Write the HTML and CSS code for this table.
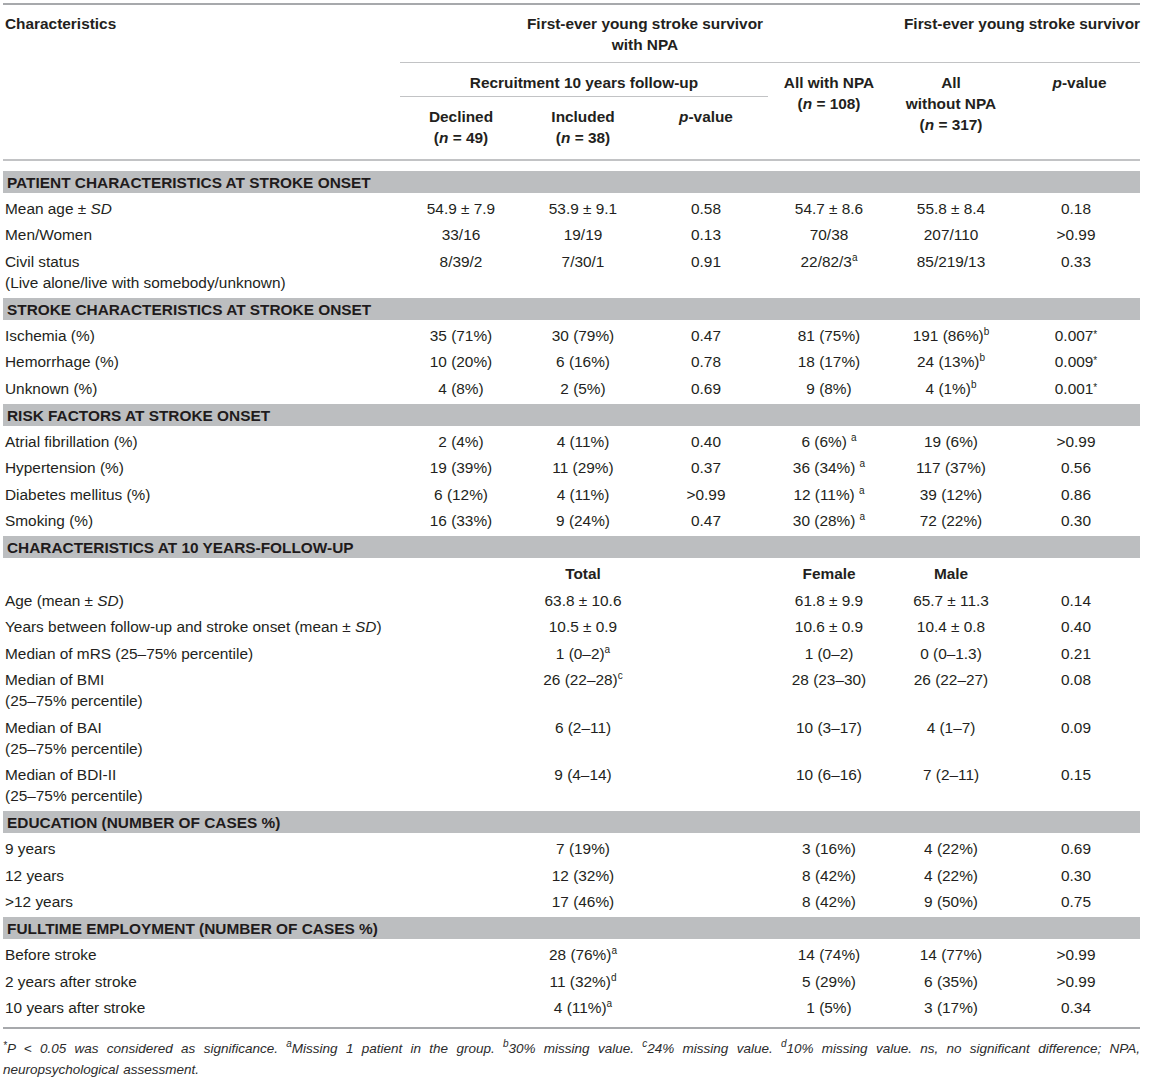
FILE: index.html
```html
<!DOCTYPE html>
<html>
<head>
<meta charset="utf-8">
<link rel="stylesheet" href="styles.css">
</head>
<body>
<div class="page">
<table class="tbl">
  <colgroup>
    <col class="c-label"><col class="c-a"><col class="c-b"><col class="c-p"><col class="c-c"><col class="c-d"><col class="c-q">
  </colgroup>
  <thead>
    <tr class="h1">
      <th rowspan="3" class="hlabel">Characteristics</th>
      <th colspan="4" class="grp">First-ever young stroke survivor<br>with NPA</th>
      <th colspan="2" class="grp grp-r">First-ever young stroke survivor</th>
    </tr>
    <tr class="h2">
      <th colspan="3" class="sub">Recruitment 10 years follow-up</th>
      <th rowspan="2" class="tall">All with NPA<br>(<i>n</i> = 108)</th>
      <th rowspan="2" class="tall">All<br>without NPA<br>(<i>n</i> = 317)</th>
      <th rowspan="2" class="tall pv"><i>p</i>-value</th>
    </tr>
    <tr class="h3">
      <th>Declined<br>(<i>n</i> = 49)</th>
      <th>Included<br>(<i>n</i> = 38)</th>
      <th><i>p</i>-value</th>
    </tr>
  </thead>
  <tbody>
    <tr class="sec first"><td colspan="7"><div class="bar">PATIENT CHARACTERISTICS AT STROKE ONSET</div></td></tr>
    <tr><td>Mean age ± <i>SD</i></td><td>54.9 ± 7.9</td><td>53.9 ± 9.1</td><td>0.58</td><td>54.7 ± 8.6</td><td>55.8 ± 8.4</td><td>0.18</td></tr>
    <tr><td>Men/Women</td><td>33/16</td><td>19/19</td><td>0.13</td><td>70/38</td><td>207/110</td><td>&gt;0.99</td></tr>
    <tr><td><span class="ln">Civil status</span><br><span class="ln">(Live alone/live with somebody/unknown)</span></td><td>8/39/2</td><td>7/30/1</td><td>0.91</td><td>22/82/3<sup>a</sup></td><td>85/219/13</td><td>0.33</td></tr>

    <tr class="sec"><td colspan="7"><div class="bar">STROKE CHARACTERISTICS AT STROKE ONSET</div></td></tr>
    <tr><td>Ischemia (%)</td><td>35 (71%)</td><td>30 (79%)</td><td>0.47</td><td>81 (75%)</td><td>191 (86%)<sup>b</sup></td><td>0.007<span class="ast">*</span></td></tr>
    <tr><td>Hemorrhage (%)</td><td>10 (20%)</td><td>6 (16%)</td><td>0.78</td><td>18 (17%)</td><td>24 (13%)<sup>b</sup></td><td>0.009<span class="ast">*</span></td></tr>
    <tr><td>Unknown (%)</td><td>4 (8%)</td><td>2 (5%)</td><td>0.69</td><td>9 (8%)</td><td>4 (1%)<sup>b</sup></td><td>0.001<span class="ast">*</span></td></tr>

    <tr class="sec"><td colspan="7"><div class="bar">RISK FACTORS AT STROKE ONSET</div></td></tr>
    <tr><td>Atrial fibrillation (%)</td><td>2 (4%)</td><td>4 (11%)</td><td>0.40</td><td>6 (6%) <sup>a</sup></td><td>19 (6%)</td><td>&gt;0.99</td></tr>
    <tr><td>Hypertension (%)</td><td>19 (39%)</td><td>11 (29%)</td><td>0.37</td><td>36 (34%) <sup>a</sup></td><td>117 (37%)</td><td>0.56</td></tr>
    <tr><td>Diabetes mellitus (%)</td><td>6 (12%)</td><td>4 (11%)</td><td>&gt;0.99</td><td>12 (11%) <sup>a</sup></td><td>39 (12%)</td><td>0.86</td></tr>
    <tr><td>Smoking (%)</td><td>16 (33%)</td><td>9 (24%)</td><td>0.47</td><td>30 (28%) <sup>a</sup></td><td>72 (22%)</td><td>0.30</td></tr>

    <tr class="sec"><td colspan="7"><div class="bar">CHARACTERISTICS AT 10 YEARS-FOLLOW-UP</div></td></tr>
    <tr class="bold"><td></td><td></td><td>Total</td><td></td><td>Female</td><td>Male</td><td></td></tr>
    <tr><td>Age (mean ± <i>SD</i>)</td><td></td><td>63.8 ± 10.6</td><td></td><td>61.8 ± 9.9</td><td>65.7 ± 11.3</td><td>0.14</td></tr>
    <tr><td>Years between follow-up and stroke onset (mean ± <i>SD</i>)</td><td></td><td>10.5 ± 0.9</td><td></td><td>10.6 ± 0.9</td><td>10.4 ± 0.8</td><td>0.40</td></tr>
    <tr><td>Median of mRS (25–75% percentile)</td><td></td><td>1 (0–2)<sup>a</sup></td><td></td><td>1 (0–2)</td><td>0 (0–1.3)</td><td>0.21</td></tr>
    <tr><td>Median of BMI<br>(25–75% percentile)</td><td></td><td>26 (22–28)<sup>c</sup></td><td></td><td>28 (23–30)</td><td>26 (22–27)</td><td>0.08</td></tr>
    <tr><td>Median of BAI<br>(25–75% percentile)</td><td></td><td>6 (2–11)</td><td></td><td>10 (3–17)</td><td>4 (1–7)</td><td>0.09</td></tr>
    <tr><td>Median of BDI-II<br>(25–75% percentile)</td><td></td><td>9 (4–14)</td><td></td><td>10 (6–16)</td><td>7 (2–11)</td><td>0.15</td></tr>

    <tr class="sec"><td colspan="7"><div class="bar">EDUCATION (NUMBER OF CASES %)</div></td></tr>
    <tr><td>9 years</td><td></td><td>7 (19%)</td><td></td><td>3 (16%)</td><td>4 (22%)</td><td>0.69</td></tr>
    <tr><td>12 years</td><td></td><td>12 (32%)</td><td></td><td>8 (42%)</td><td>4 (22%)</td><td>0.30</td></tr>
    <tr><td>&gt;12 years</td><td></td><td>17 (46%)</td><td></td><td>8 (42%)</td><td>9 (50%)</td><td>0.75</td></tr>

    <tr class="sec"><td colspan="7"><div class="bar">FULLTIME EMPLOYMENT (NUMBER OF CASES %)</div></td></tr>
    <tr><td>Before stroke</td><td></td><td>28 (76%)<sup>a</sup></td><td></td><td>14 (74%)</td><td>14 (77%)</td><td>&gt;0.99</td></tr>
    <tr><td>2 years after stroke</td><td></td><td>11 (32%)<sup>d</sup></td><td></td><td>5 (29%)</td><td>6 (35%)</td><td>&gt;0.99</td></tr>
    <tr class="last"><td>10 years after stroke</td><td></td><td>4 (11%)<sup>a</sup></td><td></td><td>1 (5%)</td><td>3 (17%)</td><td>0.34</td></tr>
  </tbody>
</table>
<p class="foot"><span class="ast">*</span>P &lt; 0.05 was considered as significance. <sup>a</sup>Missing 1 patient in the group. <sup>b</sup>30% missing value. <sup>c</sup>24% missing value. <sup>d</sup>10% missing value. ns, no significant difference; NPA, <span class="wrapword">neuropsychological assessment.</span></p>
</div>
</body>
</html>
```

FILE: styles.css
```css
html, body {
  margin: 0;
  padding: 0;
  background: #ffffff;
}

body {
  font-family: "Liberation Sans", Arial, sans-serif;
  color: #231f20;
  font-size: 15.4px;
}

.page {
  padding: 3px 0 0 3px;
  width: 1137px;
}

.tbl {
  width: 1137px;
  table-layout: fixed;
  border-collapse: separate;
  border-spacing: 0;
  border-top: 2px solid #a7a9ac;
}

.c-label { width: 397px; }
.c-a { width: 122px; }
.c-b { width: 122px; }
.c-p { width: 124px; }
.c-c { width: 122px; }
.c-d { width: 122px; }
.c-q { width: 128px; }

th {
  font-weight: bold;
  line-height: 21px;
  text-align: center;
  vertical-align: top;
  padding: 0 3px;
}

.h1 th {
  padding-top: 7.5px;
  padding-bottom: 7.5px;
}

.hlabel {
  text-align: left;
  padding-left: 2px;
  border-bottom: 2px solid #c2c3c5;
}

.grp {
  border-bottom: 1px solid #c2c3c5;
}

.grp-r {
  text-align: right;
  padding-right: 0;
}

.h2 th {
  padding-top: 8.5px;
}

.sub {
  padding-bottom: 3.5px;
  border-bottom: 1px solid #c2c3c5;
}

.tall {
  border-bottom: 2px solid #c2c3c5;
}

.pv {
  padding-left: 10px;
}

.h3 th {
  padding-top: 8.5px;
  padding-bottom: 10px;
  line-height: 21.5px;
  border-bottom: 2px solid #c2c3c5;
}

td {
  padding: 2.75px 3px;
  line-height: 21px;
  text-align: center;
  vertical-align: top;
  white-space: nowrap;
}

td:first-child {
  text-align: left;
  padding-left: 2px;
}

.sec td {
  padding: 2.25px 0;
}

.sec.first td {
  padding-top: 10px;
}

.bar {
  background: #bcbec0;
  height: 22px;
  line-height: 23px;
  padding-left: 4px;
  font-weight: bold;
  color: #1f1b1c;
}

.bold td {
  font-weight: bold;
}

.last td {
  padding-bottom: 9px;
  border-bottom: 2px solid #a7a9ac;
}

sup {
  font-size: 10px;
  line-height: 1;
  vertical-align: baseline;
  position: relative;
  top: -6px;
}

.ast {
  font-size: 10px;
  line-height: 1;
  position: relative;
  top: -3px;
}

.foot {
  margin: 0;
  padding-top: 9px;
  font-style: italic;
  font-size: 13.5px;
  word-spacing: 1px;
  line-height: 21px;
  text-align: justify;
  color: #2b2b2b;
}

.foot .ast {
  top: -4px;
}

.wrapword {
  display: inline-block;
}
```
